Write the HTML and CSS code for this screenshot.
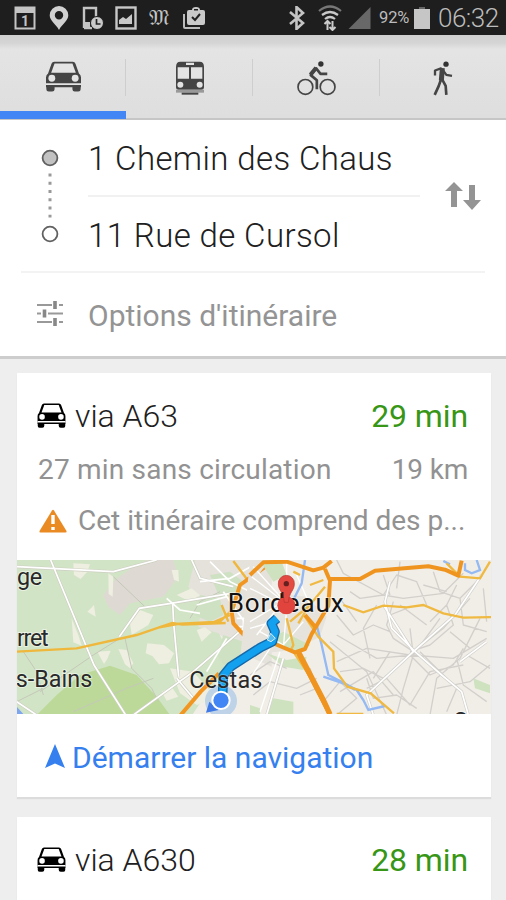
FILE: index.html
```html
<!DOCTYPE html>
<html lang="fr">
<head>
<meta charset="utf-8">
<title>Itinéraire</title>
<link rel="stylesheet" href="styles.css">
</head>
<body>
<svg class="defs" aria-hidden="true">
  <symbol id="car" viewBox="0 0 102 90">
    <path d="M24 2h54q6 0 8 6l10 28q6 4 6 12v28H0V48q0-8 6-12L16 8q2-6 8-6z" fill="currentColor"/>
    <path d="M1 74h24v8q0 7-7 7H8q-7 0-7-7zM77 74h24v8q0 7-7 7H84q-7 0-7-7z" fill="currentColor"/>
    <path class="hole" d="M25 7h52l10 27H15z"/>
    <circle class="hole" cx="17" cy="50" r="10"/><circle class="hole" cx="85" cy="50" r="10"/>
    <path class="hole" d="M0 65h102v5H0z"/>
  </symbol>
</svg>

<header class="status">
  <div class="status-left">
    <svg class="s1" viewBox="0 0 22 24"><rect x="1.5" y="1.5" width="19" height="21" fill="none" stroke="#c4c4c4" stroke-width="2"/><path d="M2 2h18v5H2z" fill="#c4c4c4"/><text x="11" y="20" text-anchor="middle" class="cal">1</text></svg>
    <svg class="s2" viewBox="0 0 20 24"><path fill-rule="evenodd" d="M10 0a9.3 9.3 0 0 1 9.3 9.3C19.300 15 13 18 10 24 7 18 .7 15 .7 9.300A9.300 9.300 0 0 1 10 0zm0 5a4.200 4.200 0 1 0 0 8.400A4.200 4.200 0 0 0 10 5z" fill="#d0d0d0"/></svg>
    <svg class="s3" viewBox="0 0 22 24"><path d="M2 22V2h12v9M2 22h8" fill="none" stroke="#c4c4c4" stroke-width="2.400"/><path d="M2 16h6v7H2z" fill="#c4c4c4"/><circle cx="15" cy="17" r="6.500" fill="#c9c9c9" stroke="#1e1e1e"/><path d="M14.500 13v5h4" fill="none" stroke="#222" stroke-width="1.700"/></svg>
    <svg class="s4" viewBox="0 0 22 24"><rect x="1.500" y="1.500" width="19" height="21" fill="none" stroke="#c8c8c8" stroke-width="2.400"/><path d="M4 18v-4l4-3 3 2 6-5v10z" fill="#c8c8c8"/></svg>
    <span class="s5">𝔐</span>
    <svg class="s6" viewBox="0 0 22 24"><path d="M1 8v13q0 1 1 1h15" fill="none" stroke="#bbb" stroke-width="2"/><path fill-rule="evenodd" d="M4 6q0-2 2-2h3q0-3 4-3t4 3h3q2 0 2 2v11q0 2-2 2H6q-2 0-2-2zM11 3h4v1.500h-4z" fill="#cacaca"/><path d="M9 11l3 3 5-6" fill="none" stroke="#222" stroke-width="2"/></svg>
  </div>
  <div class="status-right">
    <svg class="bt" viewBox="0 0 18 24"><path d="M2 6l13 11-6.500 6V1L15 7 2 18" fill="none" stroke="#c4c4c4" stroke-width="2.600"/></svg>
    <svg class="wifi" viewBox="0 0 24 26"><path d="M1 6q11-9 22 0" fill="none" stroke="#777" stroke-width="2.200"/><path d="M4 10q8-6 16 0M7 14q5-4 10 0" fill="none" stroke="#c8c8c8" stroke-width="2.200"/><path d="M9.500 25v-8M14.500 16v8M6.500 19l3-3 3 3M11.500 22l3 3 3-3" fill="none" stroke="#ccc" stroke-width="2"/></svg>
    <svg class="sig" viewBox="0 0 22 22"><path d="M22 0v22H0z" fill="#686868"/></svg>
    <span class="pct">92%</span>
    <svg class="bat" viewBox="0 0 16 22"><path d="M5 0h6v2H5z" fill="#666"/><path d="M0 2h16v20H0z" fill="#c6c6c6"/></svg>
    <span class="time">06:32</span>
  </div>
</header>

<nav class="tabs">
  <div class="tab active"><svg class="tab-car" viewBox="0 0 102 90"><use href="#car"/></svg></div>
  <div class="tab"><svg class="tab-bus" viewBox="0 0 90 102">
    <path d="M16 2h58q13 0 13 16v60q0 8-8 8H11q-8 0-8-8V18Q3 2 16 2z" fill="#454545"/>
    <path d="M33 5h24v7H33zM8 19h34v34H8zM48 19h34v34H48z" fill="#e4e4e4"/>
    <circle cx="16" cy="71" r="9" fill="#e4e4e4"/><circle cx="74" cy="71" r="9" fill="#e4e4e4"/>
    <path d="M3 86h84v9H3z" fill="#999"/><path d="M20 95h50v6H20z" fill="#454545"/></svg></div>
  <div class="tab"><svg class="tab-bike" viewBox="0 0 116 104">
    <g fill="none" stroke="#454545"><circle cx="25" cy="77" r="22" stroke-width="5"/><circle cx="91" cy="77" r="22" stroke-width="5"/><path d="M59 84V57L41 42 57 22 70 38h20" stroke-width="8" stroke-linejoin="round"/><path d="M40 41L57 20" stroke-width="12"/></g><circle cx="71" cy="9" r="8" fill="#333"/></svg></div>
  <div class="tab"><svg class="tab-walk" viewBox="0 0 60 104">
    <g fill="none" stroke="#454545" stroke-linejoin="round"><path d="M6 43V28l20-7" stroke-width="7"/><path d="M27 23l13 18 17 3" stroke-width="7"/><path d="M28 21l-3 37" stroke-width="15"/><path d="M24 55l-7 20L5 101M27 54l11 20 2 27" stroke-width="8"/></g><circle cx="39" cy="9" r="8" fill="#333"/></svg></div>
</nav>

<section class="search">
  <div class="endpoints">
    <svg class="track" viewBox="0 0 18 96"><circle cx="9" cy="10" r="7.400" fill="#c2c2c2" stroke="#616161" stroke-width="1.800"/><path d="M9 25.500v44" stroke="#999" stroke-width="3" stroke-dasharray="3 5.250"/><circle cx="9" cy="86" r="7.400" fill="#fff" stroke="#616161" stroke-width="1.800"/></svg>
    <div class="fields">
      <div class="field"><span class="from">1 Chemin des Chaus</span></div>
      <div class="field"><span class="to">11 Rue de Cursol</span></div>
    </div>
    <svg class="swap" viewBox="0 0 36 28"><path d="M9 0l9 9h-6v16H6V9H0zM24 3h6v15h6l-9 10-9-10h6z" fill="#949494"/></svg>
  </div>
  <div class="options">
    <svg viewBox="0 0 26 26"><path d="M0 4h15M22 4h4M0 12.500h4M11 12.500h15M0 21h15M22 21h4" stroke="#999" stroke-width="2"/><path d="M18 0v8M7.500 8.500v8M18 17v8" stroke="#888" stroke-width="3.600"/></svg>
    <span class="opt-text">Options d'itinéraire</span>
  </div>
</section>

<main class="results">
  <article class="card">
    <div class="row main"><svg class="car" viewBox="0 0 102 90"><use href="#car"/></svg><span class="via">via A63</span><span class="mins">29 min</span></div>
    <div class="row sub"><span class="traffic">27 min sans circulation</span><span class="km">19 km</span></div>
    <div class="row warn"><svg viewBox="0 0 28 24"><path d="M13 1.500q1-1.500 2 0l12.500 20.500q.5 1.500-1 1.500h-25q-1.500 0-1-1.500z" fill="#e98b22"/><path d="M14 6v9M14 18v3" stroke="#fff" stroke-width="3.400"/></svg><span class="toll">Cet itinéraire comprend des p...</span></div>
    <svg class="map" viewBox="0 0 1422 462">
      <rect width="1422" height="462" fill="#f1eee8"/>
      <g transform="translate(-21 -15)">
        <path d="M0 0h560l30 60 40 40 30 80-30 60 40 90-70 70-60 90H0z" fill="#d2e4c6"/>
        <path d="M315 75l55-40 40-20h80l15 50-45 60-100 20-30 35-35-25-15-35z" fill="#dedad3"/>
        <path d="M555 15h230v320l-90-40-70-60-60-20 10-60-40-60z" fill="#e5e1db"/>
        <path d="M80 480l60-60 70-60 90-28 80 28 60 65 40 55z" fill="#bcd99a"/>
        <path d="M600 60l60-10 40 30-10 40-60 10zM570 120l60 10 10 50-40 20-50-20zM640 240l60 20 10 50-60 30-30-40z" fill="#cfe1c3"/>
        <path d="M190 25l50 3-8 22-20 22-20-12zM295 55l15 10-2 60-12-8zM232 170l20-20 5 35zM485 45h20l2 35-15-6zM185 190l20 50 10 32-25-10zM360 205l30-40 40 15-15 30-50 30zM262 290l40-3-10 25-10 15zM325 282l25 3 20 40-10 15-15-12zM412 265l50 5 30 25-15 30-30 3-20-25-20-8zM560 225l25-8 20 15-30 28zM480 340l70 10 70 80-60 20-50-35zM455 410l30-15 20 30-35 12zM500 120l45-20 25 20-30 20z" fill="#eeeee1"/>
        <path d="M40 290l40 60 20 70M90 410l160-110 80-50M190 470l160-70 80-30M345 250l20 90 60 60 20 40M310 65l100 95M540 190l30-50 60-30M20 440l80-40" fill="none" stroke="#c4c8b9" stroke-width="3"/>
        <path fill="none" stroke="#cdcfc2" stroke-width="9" d="M122 15l130 315 95 150M20 35l290 15L440 15M328 245l60-85 90-14 180-30M488 145l3 60 15 160M370 480l180-130 150-130M545 15l25 55 100 25M500 370l50 60M20 440l60 40"/>
        <path class="w" d="M122 15l130 315 95 150M20 35l290 15L440 15M328 245l60-85 90-14 180-30M488 145l3 60 15 160M370 480l180-130 150-130M545 15l25 55 100 25M500 370l50 60M20 440l60 40"/>
        <g fill="none" stroke="#fff" stroke-width="5"><path d="M570 80l90-10 80-45M640 110l70 100 50 50M600 20l60 60 100 50M700 190v60M720 160v100M680 190h80M680 215h80M560 150l90-25M470 130l40 35 60 10M650 250l-60 100"/></g>
        <path d="M20 290l180-10 180-40 65-22 65-12 120-6 35-35M445 218l42-14 30 5 130-5M670 18l45 60M635 150l20 50M610 202l50-22" fill="none" stroke="#efb73c" stroke-width="7"/>
        <path d="M780 25l-90 65-25 80 5 35 45 50 75 5M512 480l60-70 55-55" fill="none" stroke="#f29622" stroke-width="12" stroke-linejoin="round"/>
        <path d="M20 455l20 22H20z" fill="#7ea6ef"/>
      </g>
      <g transform="translate(699 -15)">
        <path d="M0 15h60l-40 50 60 50 90 10 60 60-20 60-80 40-90 10-70 20z" fill="#e6e3dc"/>
        <path d="M35 25l60-5 15 40-40 20zM60 250l40-20 80 40-30 25-60-20zM50 295l60 20 60-10-10 40-60-10zM70 430l60 10v40H50zM0 450l30 10v20H0zM670 370l50 20v25l-45-15z" fill="#cee2c0"/>
        <g fill="none" stroke="#d3d0cc" stroke-width="4" stroke-linejoin="round">
          <path d="M260 15l20 40 120 65 40-60 60 20 30 70M300 110l30 20 70-10 60 10 120-15 60-60M430 140l-20 70 20 40 60 40 90-70 80-90M260 180l50 60 60-30 50 20M260 240l120 70 110-10 80-110M260 320l90-40 130 20 130 10 100-60M270 350l70-10 60 30 80-70 60 60 70-30 30-50M350 400l60-30 70 80 60-100 100-20M240 260l110 90 60 130M440 480l20-80 30-100-10-80M540 480l20-110 70-60 60-120M590 150l20 60-70 60-60 20M380 150l-40 70 20 90M620 90l-30 60-50 50M690 70l-60 60 10 80 70 20M500 300l-80-120 50-20M400 60l20 60M550 50l20 60 60 20M620 310l20 80 70 50M560 400l100-20 60-50M350 370l20 60 70-10 60 40M180 340l20 60-50 20M220 440l50-60 50 50-60 50M10 420l50-40 80 20 60-30M0 360l60-40 50 20"/>
          <path d="M270 130l50 70M450 20l-10 80M520 90l70 20M450 150l80 60M600 230l60 50M510 290l100 100M270 410l100-60 60 70M550 330l70 70-30 70M420 290l-50 80M650 300l70 40M700 100l10 100"/>
        </g>
        <path fill="none" stroke="#d2d0cb" stroke-width="9" d="M420 80l-15 60 20 80 70 70 80 70 60 50 20 70M400 150l90 140 125-110 80-120M370 480l-20-60 140-130M100 310l-50 170M630 320l80-60"/>
        <path class="w" d="M420 80l-15 60 20 80 70 70 80 70 60 50 20 70M400 150l90 140 125-110 80-120M370 480l-20-60 140-130M100 310l-50 170M630 320l80-60"/>
        <g fill="none" stroke="#fff" stroke-width="4"><path d="M5 65l90 70M0 100l100 50M10 35l90 100M110 20v100M0 200l100-60M20 240l70-90M0 220l70-20M110 160l-10 120M30 230l70 40 60-70M60 280l-60 90M90 290l-60 180M140 60l40 90"/></g>
        <path d="M165 15l-10 70-25 50M200 210l15 60 20 90 40 20 45 25 20 30 15 30 50-12M220 365l60 20 35 20M580 18l20 10M645 25v20l20 10 25-10-10-30" fill="none" stroke="#94b9f3" stroke-width="7"/>
        <path d="M720 20l-30 50-60-5-40-40M110 190l20 80-10 20M130 290l60 90M280 150l60 22 60-20 70 5 50-7 60 25 60 13 90-2M180 90l40-15M165 185l40 60 45 45 2 50 40 55 70 20 70 60M145 205l30-50 50-60M120 200l60-50M130 50l20 10M260 477h80" fill="none" stroke="#efb942" stroke-width="7"/>
        <path d="M0 60l40-38 70-2 80 26 30-8 25-20M225 42l15 35-5 75-50 85-20 45-30 10-60-25-20-10M140 285l100 195M165 180l30 35M235 72h95l45-25 160-13 50 10 40 18 10-45" fill="none" stroke="#ef951f" stroke-width="12" stroke-linejoin="round"/>
        <path d="M145 290l75 145 20 43" fill="none" stroke="#ef951f" stroke-width="16"/>
      </g>
      <text x="632" y="157" textLength="348" class="map-label big">Bordeaux</text>
      <text x="0" y="74" textLength="75" class="map-label">ge</text>
      <text x="0" y="257" textLength="95" class="map-label">rret</text>
      <text x="-4" y="381" textLength="230" class="map-label">s-Bains</text>
      <text x="1310" y="506" class="map-label">S</text>
      <circle cx="612" cy="423" r="48" fill="#75a9e8" opacity=".4"/>
      <path d="M617 400l2-53 22-27 90-58 35-17 8-30-11-25 17-15" fill="none" stroke="#1669a9" stroke-width="29" stroke-linejoin="round"/>
      <path d="M617 400l2-53 22-27 90-58 35-17 8-30-11-25 17-15" fill="none" stroke="#12a0ef" stroke-width="21" stroke-linejoin="round"/>
      <path d="M751 240l10-20 14 15-13 10z" fill="#54bcef" stroke="#d7ecf4" stroke-width="3"/>
      <text x="517" y="384" textLength="219" class="map-label plain">Cestas</text>
      <path d="M577 425l28 25-38 8z" fill="#3e79e5"/>
      <circle cx="612" cy="421" r="26" fill="#4285f4" stroke="#fff" stroke-width="6"/>
      <circle cx="808" cy="136" r="27" fill="#e0443d"/>
      <path d="M808 46a24 24 0 0 1 24 26c0 20-16 24-18 55h-12c-2-31-18-35-18-55a24 24 0 0 1 24-26z" fill="#e34a42" stroke="#b53531" stroke-width="2"/><circle cx="808" cy="71" r="8" fill="#672020"/><path d="M797 96v18" stroke="#331c20" stroke-width="5"/>
    </svg>
    <div class="go"><svg viewBox="0 0 20 24"><path d="M10 0l10 24-10-4.500L0 24z" fill="#3580ee"/></svg><span class="start">Démarrer la navigation</span></div>
  </article>
  <article class="card last">
    <div class="row main"><svg class="car" viewBox="0 0 102 90"><use href="#car"/></svg><span class="via">via A630</span><span class="mins">28 min</span></div>
  </article>
</main>
</body>
</html>
```
FILE: styles.css
```css
* { box-sizing: border-box; }
body { margin: 0; width: 506px; height: 900px; overflow: hidden; background: #eee; font-family: Roboto, "Liberation Sans", sans-serif; white-space: nowrap; }
svg { display: block; flex: none; }
.defs { display: none; }
.hole { fill: var(--hole, #fff); }

.status { height: 35px; background: #1e1e1e; color: #bcbcbc; display: flex; justify-content: space-between; padding: 0 7px 0 14px; }
.status-left, .status-right { display: flex; align-items: center; }
.s1, .s4 { width: 22px; height: 24px; }
.s2 { width: 20px; height: 24px; margin-left: 13px; }
.s3 { width: 22px; height: 24px; margin-left: 13px; }
.s4 { margin-left: 11px; }
.s5 { width: 22px; margin-left: 12px; font: 22px/24px "DejaVu Sans", "DejaVu Serif", serif; color: #c4c4c4; }
.s6 { width: 22px; height: 24px; margin-left: 12px; }
.cal { font: bold 14px Roboto; fill: #c4c4c4; }
.bt { width: 18px; height: 24px; margin-right: 12px; }
.wifi { width: 24px; height: 26px; margin-right: 6px; }
.sig { width: 23px; height: 22px; margin-right: 8px; }
.pct { width: 32px; font-size: 16.500px; letter-spacing: -.1px; margin-right: 3px; }
.bat { width: 16px; height: 22px; margin-right: 8px; }
.time { width: 61px; font-size: 26px; letter-spacing: -.5px; font-weight: 300; }

.tabs { height: 85px; display: grid; grid-template-columns: 126px 127px 127px 126px; background: linear-gradient(#cfcfcf, #d5d5d5 8px, #e4e4e4 14px, #dedede); border-bottom: 2px solid #c6c6c6; color: #454545; --hole: #e4e4e4; }
.tab { position: relative; display: flex; justify-content: center; padding-top: 26px; border-right: 1px solid transparent; border-image: linear-gradient(transparent 29%, #cecece 29%, #cecece 73%, transparent 73%) 1; }
.tab:last-child { border: 0; }
.tab.active::after { content: ""; position: absolute; left: 0; bottom: -1px; width: 126px; height: 8px; background: #4285f4; }
.tab-car { width: 35px; height: 31px; margin-left: 1px; }
.tab-bus { width: 30px; height: 34px; margin-left: 2px; }
.tab-bike { width: 39px; height: 35px; }
.tab-walk { width: 20px; height: 35px; }

.search { height: 239px; background: #fff; border-bottom: 3px solid #cdcdcd; padding: 0 21px; }
.endpoints { height: 153px; display: flex; border-bottom: 2px solid #f3f3f3; }
.track { width: 18px; height: 96px; margin: 28px 0 0 20px; }
.fields { width: 332px; margin-left: 29px; }
.field { height: 77px; padding-top: 18px; font-weight: 300; font-size: 33px; line-height: 42px; color: #202020; }
.field:first-child { border-bottom: 2px solid #f1f1f1; }
.from, .to { letter-spacing: .38px; }
.swap { width: 36px; height: 28px; margin: 62px 0 0 25px; }
.options { display: flex; align-items: center; height: 84px; padding: 1px 0 0 16px; font-size: 30px; color: #949494; }
.options svg { width: 26px; height: 26px; margin: -3px 25px 0 0; }

.results { height: 541px; overflow: hidden; padding: 14px 15px 0 17px; }
.card { background: #fff; box-shadow: 0 2px 1px #dcdcdc; margin-bottom: 20px; height: 424px; padding-top: 1px; }
.card.last { height: 83px; margin-bottom: 0; }
.row { display: flex; align-items: center; padding: 0 23px 0 21px; }
.row span:last-child:not(.toll) { margin-left: auto; }
.main { height: 84px; font-size: 32px; font-weight: 300; color: #202020; }
.car { width: 29px; height: 25px; color: #000; margin: -1px 9px 0 -1px; }
.mins { color: #389617; font-weight: 400; letter-spacing: -.1px; }
.sub { height: 23px; font-size: 28px; color: #929292; }
.traffic { letter-spacing: .2px; }
.km { letter-spacing: -.2px; }
.warn { height: 79px; font-size: 28px; color: #929292; }
.warn svg { width: 28px; height: 24px; margin: 0 11px 0 1px; }
.map { width: 474px; height: 154px; }
.w { fill: none; stroke: #fff; stroke-width: 5px; }
.map-label { font: 70px Roboto; fill: #292929; stroke: #fff; stroke-opacity: .5; stroke-width: 6px; paint-order: stroke; }
.plain { stroke-opacity: .25; }
.big { font-size: 78px; fill: #111; }
.go { height: 83px; display: flex; align-items: center; padding: 4px 0 0 28px; color: #3580ee; font-size: 30px; }
.go svg { width: 20px; height: 24px; margin: -3px 7px 0 0; }
```
